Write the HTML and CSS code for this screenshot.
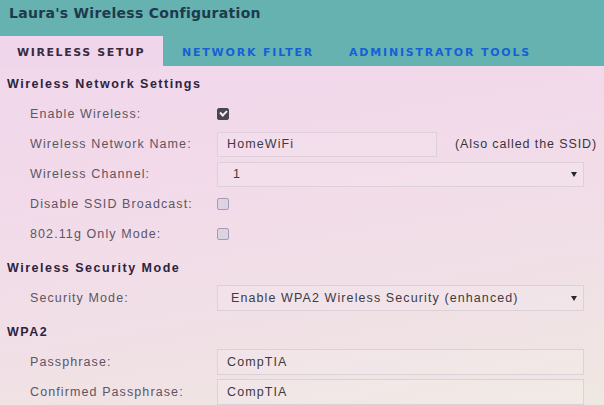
FILE: index.html
```html
<!DOCTYPE html>
<html lang="en">
<head>
  <meta charset="UTF-8">
  <title>Laura's Wireless Configuration</title>
  <link rel="stylesheet" href="styles.css">
</head>
<body>
  <div class="header">
    <h1>Laura's Wireless Configuration</h1>
    <div class="tabs">
      <span class="tab active">Wireless Setup</span>
      <span class="tab">Network Filter</span>
      <span class="tab">Administrator Tools</span>
    </div>
  </div>

  <div class="content">
    <h2>Wireless Network Settings</h2>
    <div class="row">
      <label>Enable Wireless:</label>
      <span class="check checked"></span>
    </div>
    <div class="row">
      <label>Wireless Network Name:</label>
      <span class="field short">HomeWiFi</span>
      <span class="note">(Also called the SSID)</span>
    </div>
    <div class="row">
      <label>Wireless Channel:</label>
      <span class="field select channel">1<span class="arrow"></span></span>
    </div>
    <div class="row">
      <label>Disable SSID Broadcast:</label>
      <span class="check"></span>
    </div>
    <div class="row">
      <label>802.11g Only Mode:</label>
      <span class="check"></span>
    </div>

    <h2 class="gap">Wireless Security Mode</h2>
    <div class="row">
      <label>Security Mode:</label>
      <span class="field select">Enable WPA2 Wireless Security (enhanced)<span class="arrow"></span></span>
    </div>

    <h2 class="gap">WPA2</h2>
    <div class="row">
      <label>Passphrase:</label>
      <span class="field">CompTIA</span>
    </div>
    <div class="row">
      <label>Confirmed Passphrase:</label>
      <span class="field">CompTIA</span>
    </div>
  </div>
</body>
</html>
```

FILE: styles.css
```css
html, body {
  margin: 0;
  height: 100%;
}
body {
  width: 604px;
  height: 405px;
  overflow: hidden;
  font-family: "Liberation Sans", Arial, sans-serif;
  background: linear-gradient(170deg, #f1d6ea 0%, #f2daea 40%, #f0e2e5 80%, #efe8e2 100%);
}
.header {
  background: #65b2b0;
  height: 66px;
  display: flex;
  flex-direction: column;
}
h1 {
  margin: 0;
  padding: 5px 0 0 9px;
  height: 30px;
  box-sizing: border-box;
  font-family: "DejaVu Sans", Verdana, sans-serif;
  font-size: 14px;
  font-weight: bold;
  color: #1e3a4c;
  letter-spacing: 0.3px;
}
.tabs {
  display: flex;
  height: 36px;
  padding-top: 6px;
  box-sizing: border-box;
}
.tab {
  display: flex;
  align-items: center;
  padding: 2px 0 0 0;
  margin-right: 35px;
  font-family: "DejaVu Sans", Verdana, sans-serif;
  font-size: 11px;
  font-weight: bold;
  text-transform: uppercase;
  letter-spacing: 1.8px;
  color: #1660d6;
}
.tab.active {
  width: 163px;
  padding-left: 17px;
  box-sizing: border-box;
  margin-right: 19px;
  background: #f0d6ea;
  color: #3a2a3e;
  letter-spacing: 1.6px;
}
.content {
  padding: 3px 0 0 7px;
}
h2 {
  margin: 0;
  height: 30px;
  display: flex;
  align-items: center;
  font-size: 12.5px;
  font-weight: bold;
  letter-spacing: 1.5px;
  color: #2c2440;
}
h2.gap {
  margin-top: 4px;
}
.row {
  display: flex;
  align-items: center;
  height: 30px;
}
.row label {
  width: 210px;
  padding-left: 23px;
  box-sizing: border-box;
  font-size: 12.5px;
  letter-spacing: 1.1px;
  color: #5c5664;
}
.check {
  width: 10px;
  height: 10px;
  border: 1px solid #a49cb4;
  border-radius: 2px;
  background: #ddd3e3;
  position: relative;
}
.check.checked {
  background: #4a4652;
  border-color: #4a4652;
}
.check.checked::after {
  content: "";
  position: absolute;
  left: 2px;
  top: 1px;
  width: 5px;
  height: 3px;
  border-left: 2px solid #f4eef4;
  border-bottom: 2px solid #f4eef4;
  transform: rotate(-45deg);
}
.field {
  display: flex;
  align-items: center;
  width: 367px;
  height: 26px;
  box-sizing: border-box;
  padding-left: 9px;
  border: 1px solid #ddd0d8;
  background: rgba(255, 255, 255, 0.12);
  font-size: 12.5px;
  letter-spacing: 1.1px;
  color: #3e3a44;
}
.field.short {
  width: 220px;
  height: 25px;
}
.field.select {
  justify-content: space-between;
  padding-left: 13px;
  padding-right: 6px;
}
.field.channel {
  padding-left: 15px;
  height: 25px;
}
.arrow {
  width: 0;
  height: 0;
  border-left: 3.5px solid transparent;
  border-right: 3.5px solid transparent;
  border-top: 5px solid #2a2830;
}
.note {
  margin-left: 18px;
  white-space: nowrap;
  font-size: 12.5px;
  letter-spacing: 0.9px;
  color: #3a3440;
}
```
